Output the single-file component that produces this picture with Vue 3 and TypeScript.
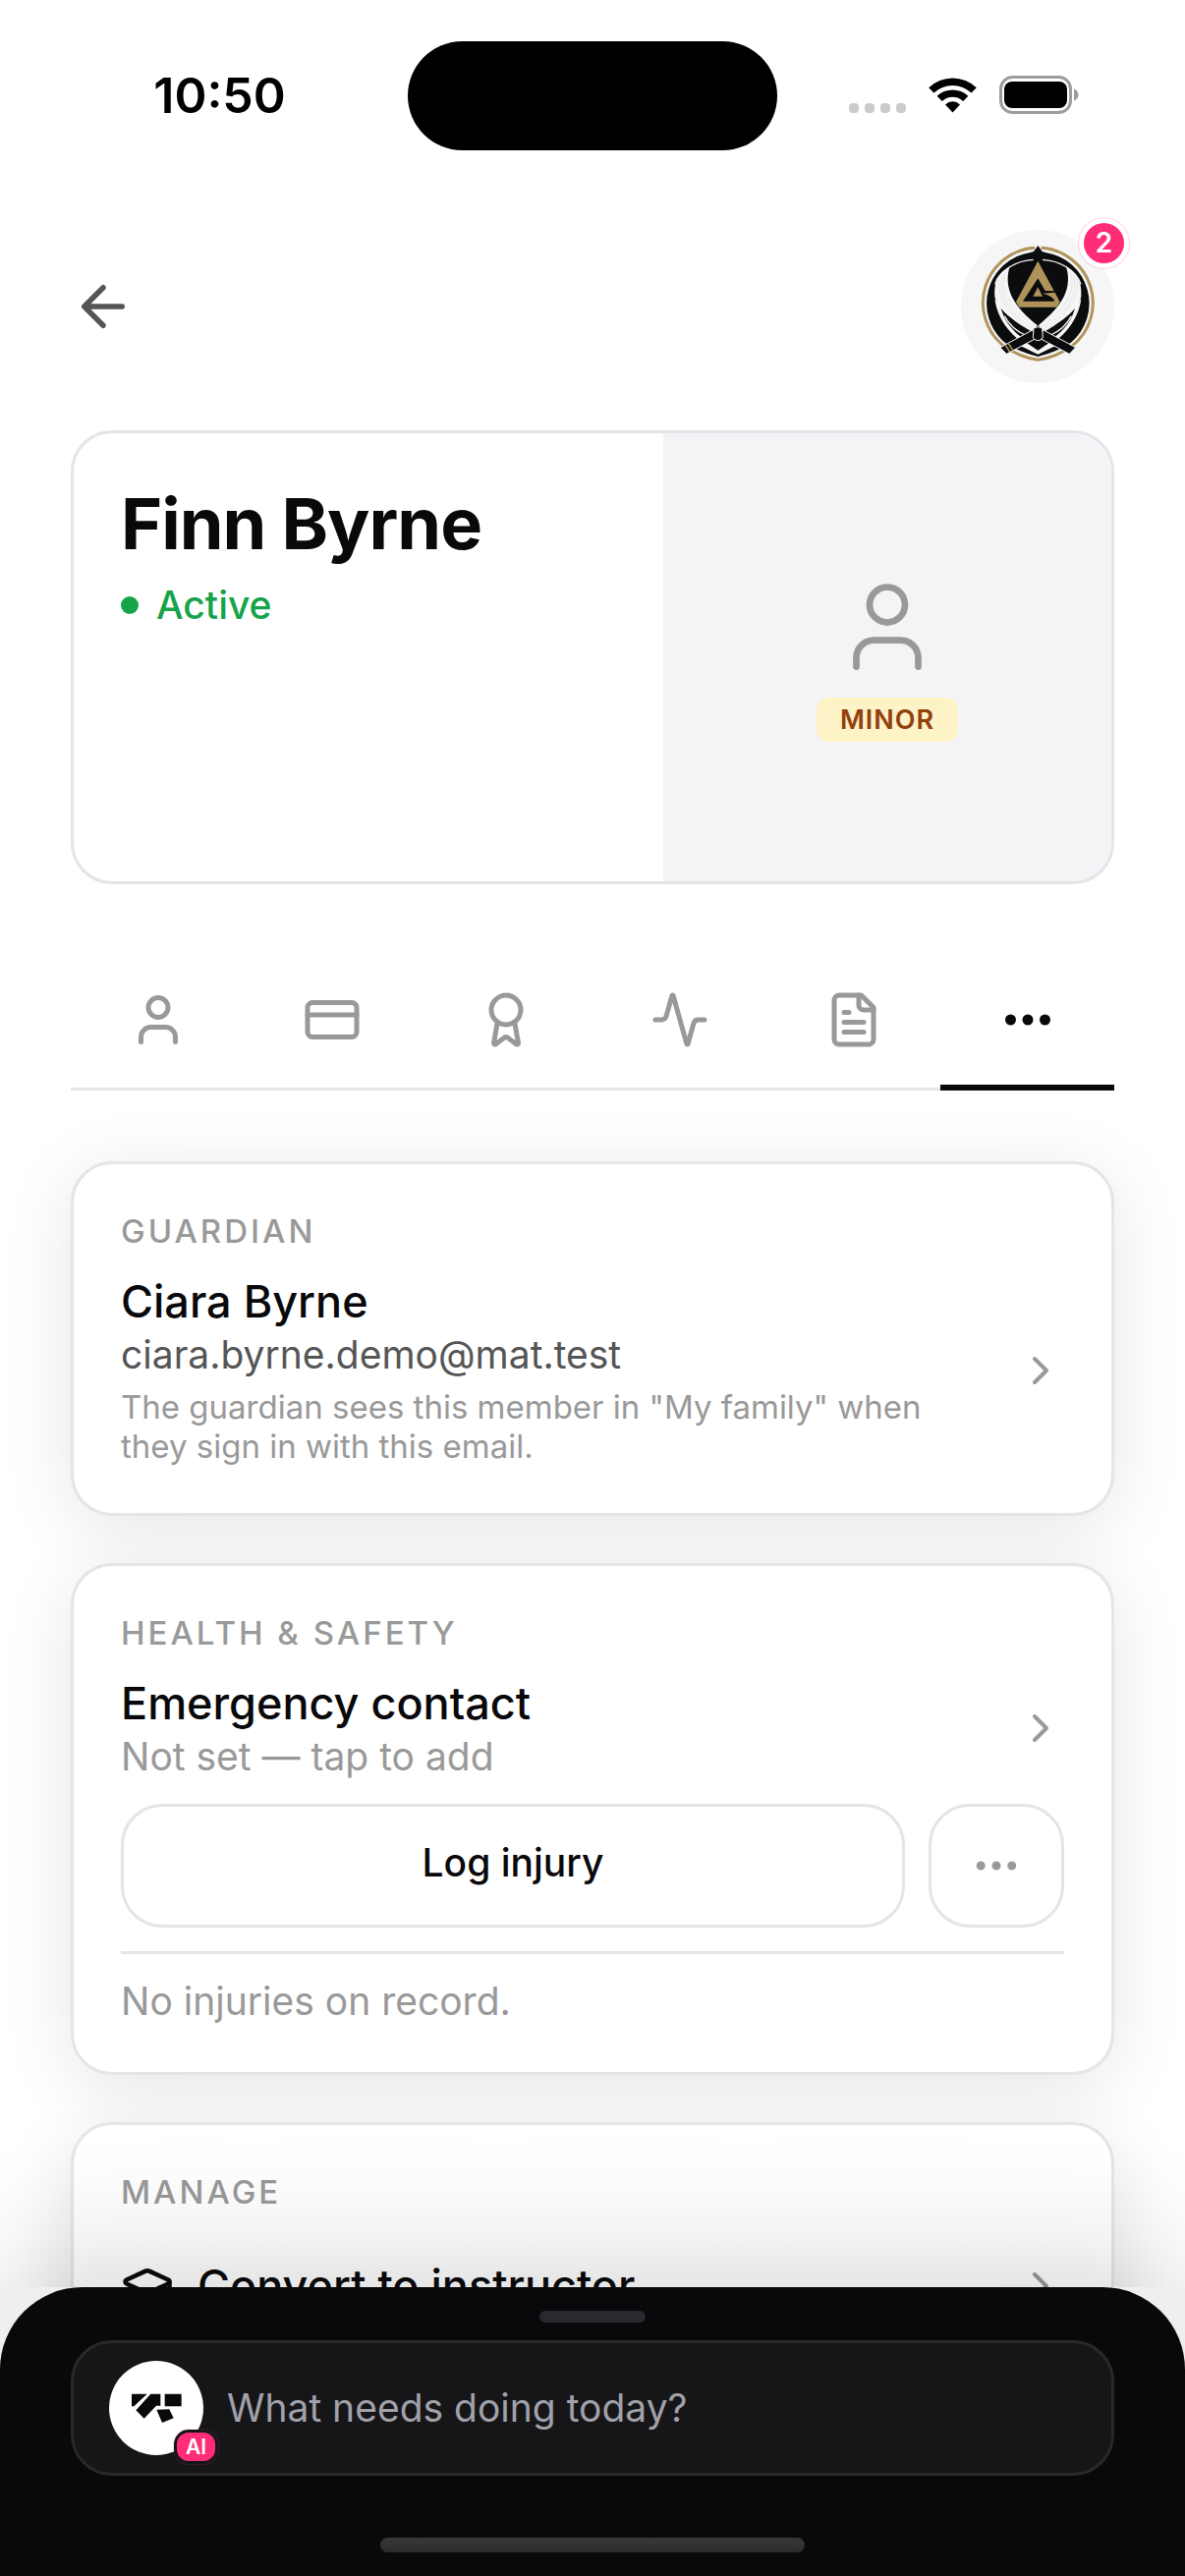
<script setup lang="ts">
import { ref } from 'vue'

interface Tab {
  id: string
  label: string
  paths: string[]
}

const tabs: Tab[] = [
  {
    id: 'profile',
    label: 'Profile',
    paths: ['M19 21v-2a4 4 0 0 0-4-4H9a4 4 0 0 0-4 4v2', 'M8 7a4 4 0 1 0 8 0a4 4 0 1 0-8 0'],
  },
  {
    id: 'billing',
    label: 'Billing',
    paths: ['M4 5h16a2 2 0 0 1 2 2v10a2 2 0 0 1-2 2H4a2 2 0 0 1-2-2V7a2 2 0 0 1 2-2z', 'M2 10h20'],
  },
  {
    id: 'grading',
    label: 'Grading',
    paths: [
      'm15.477 12.89 1.515 8.526a.5.5 0 0 1-.81.47l-3.58-2.687a1 1 0 0 0-1.197 0l-3.586 2.686a.5.5 0 0 1-.81-.469l1.514-8.526',
      'M6 8a6 6 0 1 0 12 0a6 6 0 1 0-12 0',
    ],
  },
  {
    id: 'activity',
    label: 'Activity',
    paths: [
      'M22 12h-2.48a2 2 0 0 0-1.93 1.46l-2.35 8.36a.25.25 0 0 1-.48 0L9.24 2.18a.25.25 0 0 0-.48 0l-2.35 8.36A2 2 0 0 1 4.49 12H2',
    ],
  },
  {
    id: 'documents',
    label: 'Documents',
    paths: [
      'M15 2H6a2 2 0 0 0-2 2v16a2 2 0 0 0 2 2h12a2 2 0 0 0 2-2V7z',
      'M14 2v4a2 2 0 0 0 2 2h4',
      'M10 9H8',
      'M16 13H8',
      'M16 17H8',
    ],
  },
  {
    id: 'more',
    label: 'More',
    paths: [
      'M11 12a1 1 0 1 0 2 0a1 1 0 1 0-2 0',
      'M18 12a1 1 0 1 0 2 0a1 1 0 1 0-2 0',
      'M4 12a1 1 0 1 0 2 0a1 1 0 1 0-2 0',
    ],
  },
]

const activeTab = ref('more')
const prompt = ref('')
</script>

<template>
  <div class="app">
    <div class="status">
      <span class="time">10:50</span>
      <span class="island"></span>
      <span class="signals">
        <svg width="58" height="40" viewBox="0 0 58 40" fill="#cbcbcb" aria-hidden="true">
          <rect x="0" y="28" width="10" height="10" rx="4" />
          <rect x="16" y="28" width="10" height="10" rx="4" />
          <rect x="32" y="28" width="10" height="10" rx="4" />
          <rect x="48" y="28" width="10" height="10" rx="4" />
        </svg>
        <svg width="51" height="40" viewBox="0 0 51 40" aria-hidden="true">
          <path d="M1.2 12.2A35 35 0 0 1 49.8 12.2L44.6 17.6A27.5 27.5 0 0 0 6.4 17.6Z" />
          <path d="M9.6 20.8A23 23 0 0 1 41.4 20.8L36.2 26.1A15.4 15.4 0 0 0 14.8 26.1Z" />
          <path d="M18 29.4A10.8 10.8 0 0 1 33 29.4L25.5 37.4Z" />
        </svg>
        <svg width="81" height="40" viewBox="0 0 81 40" aria-hidden="true">
          <rect x="1.5" y="1.5" width="71" height="36" rx="12" fill="none" stroke="#9c9c9c" stroke-width="3" />
          <rect x="5" y="6" width="64" height="27" rx="8" />
          <path d="M76 13.5c6 2 6 10 0 12z" fill="#9c9c9c" />
        </svg>
      </span>
    </div>

    <main class="content">
      <header class="topbar">
        <button class="back" type="button" aria-label="Back">
          <svg class="icon" width="66" height="66" viewBox="0 0 24 24"><path d="m12 19-7-7 7-7M19 12H5" /></svg>
        </button>
        <button class="club" type="button" aria-label="Club, 2 notifications">
          <svg width="156" height="156" viewBox="54 72 468 468" aria-hidden="true">
            <path
              d="M279 127A168 168 0 0 0 183 425Q232 460 289 469Q346 460 395 425A168 168 0 0 0 299 127"
              fill="none" stroke="#b0935a" stroke-width="9"
            />
            <path
              d="M289 120L302 138L312 141A157 157 0 0 1 389 417Q344 446 289 459Q234 446 189 417A157 157 0 0 1 266 141L276 138Z"
              fill="#0a0c0e"
            />
            <path d="M275 163C225 165 170 195 158 238M303 163C353 165 408 195 420 238" fill="none" stroke="#f6f6f6" stroke-width="4" />
            <path d="M203 184C172 204 154 225 157 275C168 318 215 350 268 382L288 364C235 320 178 265 203 184Z" fill="#f6f6f6" />
            <path d="M375 184C406 204 424 225 421 275C410 318 363 350 310 382L290 364C343 320 400 265 375 184Z" fill="#f6f6f6" />
            <path
              d="M180 210C163 285 220 335 273 375M190 200C167 275 225 325 280 370M170 222C160 285 212 338 266 378M398 210C415 285 358 335 305 375M388 200C411 275 353 325 298 370M408 222C418 285 366 338 312 378"
              fill="none" stroke="#dedede" stroke-width="2"
            />
            <path d="M157 282C163 335 198 385 234 409L242 401C210 380 183 345 175 305ZM421 282C415 335 380 385 344 409L336 401C368 380 395 345 403 305Z" fill="#f6f6f6" />
            <path d="M187 335C200 360 220 380 250 393M391 335C378 360 358 380 328 393" fill="none" stroke="#f6f6f6" stroke-width="4" />
            <path d="M228 422L247 412L289 440L331 412L350 422L289 452Z" fill="#f6f6f6" />
            <path d="M262 402L289 428L316 402Z" fill="#0a0c0e" />
            <g fill="#0a0c0e" stroke="#f6f6f6" stroke-width="3">
              <path d="M274 377L174 431L193 451L280 405Z" />
              <path d="M304 377L404 431L385 451L298 405Z" />
              <path d="M276 372Q289 364 302 372L304 402Q289 418 274 402Z" />
            </g>
            <path d="M190 424L203 444M199 419L212 439" stroke="#b0935a" stroke-width="5" />
            <path d="M289 167L356 292L346 308H232L222 292Z" fill="#b0935a" />
            <path d="M289 220L311 258L342 259L341 263L302 266Q328 270 341 288L334 290H243Z" fill="#0a0c0e" />
            <path d="M289 247L303 275H274Z" fill="#b0935a" />
          </svg>
          <span class="count">2</span>
        </button>
      </header>

      <section class="member">
        <div class="identity">
          <h1>Finn Byrne</h1>
          <p class="state"><span class="dot"></span>Active</p>
        </div>
        <div class="photo">
          <svg class="icon thin" width="108" height="108" viewBox="0 0 24 24" aria-hidden="true">
            <path d="M19 21v-2a4 4 0 0 0-4-4H9a4 4 0 0 0-4 4v2" />
            <circle cx="12" cy="7" r="4" />
          </svg>
          <span class="minor">MINOR</span>
        </div>
      </section>

      <nav class="tabs" aria-label="Member sections">
        <button
          v-for="tab in tabs"
          :key="tab.id"
          type="button"
          class="tab"
          :class="{ active: tab.id === activeTab }"
          :aria-label="tab.label"
          @click="activeTab = tab.id"
        >
          <svg class="icon" width="60" height="60" viewBox="0 0 24 24">
            <path v-for="d in tab.paths" :key="d" :d="d" />
          </svg>
        </button>
      </nav>

      <div class="cards">
        <section class="card">
          <h2>GUARDIAN</h2>
          <button class="row" type="button">
            <span class="lines">
              <span class="title">Ciara Byrne</span>
              <span class="sub dark">ciara.byrne.demo@mat.test</span>
              <span class="note">The guardian sees this member in "My family" when they sign in with this email.</span>
            </span>
            <svg class="icon" width="48" height="48" viewBox="0 0 24 24"><path d="m9 18 6-6-6-6" /></svg>
          </button>
        </section>

        <section class="card">
          <h2>HEALTH &amp; SAFETY</h2>
          <button class="row" type="button">
            <span class="lines">
              <span class="title">Emergency contact</span>
              <span class="sub">Not set — tap to add</span>
            </span>
            <svg class="icon" width="48" height="48" viewBox="0 0 24 24"><path d="m9 18 6-6-6-6" /></svg>
          </button>
          <div class="actions">
            <button class="outline log" type="button">Log injury</button>
            <button class="outline menu" type="button" aria-label="More options">
              <svg class="icon" width="54" height="54" viewBox="0 0 24 24">
                <circle cx="12" cy="12" r="1" /><circle cx="19" cy="12" r="1" /><circle cx="5" cy="12" r="1" />
              </svg>
            </button>
          </div>
          <p class="record">No injuries on record.</p>
        </section>

        <section class="card last">
          <h2>MANAGE</h2>
          <button class="row link" type="button">
            <svg class="icon ink" width="54" height="54" viewBox="0 0 24 24">
              <path d="M21.42 10.922a1 1 0 0 0-.019-1.838L12.83 5.18a2 2 0 0 0-1.66 0L2.6 9.08a1 1 0 0 0 0 1.832l8.57 3.908a2 2 0 0 0 1.66 0z" />
              <path d="M22 10v6" />
              <path d="M6 12.5V16a6 3 0 0 0 12 0v-3.5" />
            </svg>
            <span class="lines title">Convert to instructor</span>
            <svg class="icon" width="48" height="48" viewBox="0 0 24 24"><path d="m9 18 6-6-6-6" /></svg>
          </button>
        </section>
      </div>
    </main>

    <footer class="dock">
      <div class="sheet">
        <span class="grip"></span>
        <label class="ask">
          <span class="bot">
            <svg width="96" height="96" viewBox="0 0 288 288" aria-hidden="true">
              <path d="M69 101H116L76 139H69ZM127 101H157V137H144L107 176L82 151ZM170 101H221V139H170ZM145 149L184 148L197 175L162 189Z" fill="#09090b" />
            </svg>
            <span class="ai">AI</span>
          </span>
          <input v-model="prompt" type="text" placeholder="What needs doing today?" aria-label="Ask the assistant" />
        </label>
        <span class="home"></span>
      </div>
    </footer>
  </div>
</template>

<style>
body {
  margin: 0;
  background: #fff;
}
</style>

<style scoped>
* {
  box-sizing: border-box;
}

.app {
  display: flex;
  flex-direction: column;
  height: 100vh;
  overflow: hidden;
  background: #fff;
  color: #09090b;
  font-family: Inter, 'Liberation Sans', sans-serif;
}

h1,
h2,
p {
  margin: 0;
}

button {
  margin: 0;
  padding: 0;
  border: 0;
  background: none;
  color: inherit;
  font: inherit;
  text-align: left;
}

svg {
  display: block;
  flex: none;
}

.icon {
  fill: none;
  stroke: #999;
  stroke-width: 2;
  stroke-linecap: round;
  stroke-linejoin: round;
}

.icon.thin {
  stroke-width: 1.5;
}

.icon.ink {
  stroke: #09090b;
}

.status {
  display: grid;
  flex: none;
  grid-template-columns: 1fr 376px 1fr;
  align-items: center;
  height: 186px;
  padding-top: 8px;
}

.time {
  padding-left: 32px;
  color: #000;
  font-size: 50px;
  font-weight: 600;
  line-height: 60px;
  text-align: center;
}

.island {
  height: 111px;
  border-radius: 56px;
  background: #000;
}

.signals {
  display: flex;
  justify-content: center;
  gap: 22px;
  padding-right: 36px;
}

.content {
  flex: 1;
  min-height: 0;
  padding: 48px 72px 0;
  overflow: hidden;
}

.topbar {
  display: flex;
  align-items: center;
  justify-content: space-between;
}

.back .icon {
  stroke: #555;
}

.club {
  position: relative;
  border-radius: 50%;
  background: #f6f6f6;
}

.count {
  position: absolute;
  top: -12px;
  right: -15px;
  min-width: 51px;
  height: 51px;
  border: 5px solid #fff;
  border-radius: 26px;
  background: #ff2d78;
  box-shadow: 0 0 0 1px rgba(255, 45, 120, 0.2);
  color: #fff;
  font-size: 28px;
  font-weight: 600;
  line-height: 41px;
  text-align: center;
}

.member {
  display: flex;
  min-height: 462px;
  margin-top: 48px;
  overflow: hidden;
  border: 3px solid #e4e4e9;
  border-radius: 42px;
}

.identity {
  flex: 1;
  padding: 48px;
}

h1 {
  font-size: 72px;
  font-weight: 700;
  letter-spacing: -1px;
  line-height: 88px;
}

.state {
  display: flex;
  align-items: center;
  gap: 18px;
  margin-top: 15px;
  color: #16a34a;
  font-size: 39px;
  font-weight: 500;
  line-height: 48px;
}

.dot {
  width: 18px;
  height: 18px;
  border-radius: 50%;
  background: currentColor;
}

.photo {
  display: flex;
  flex-direction: column;
  align-items: center;
  justify-content: center;
  gap: 18px;
  width: 456px;
  background: #f4f4f7;
}

.minor {
  padding: 6px 24px;
  border-radius: 12px;
  background: #fef3c7;
  color: #92400e;
  font-size: 27px;
  font-weight: 600;
  letter-spacing: 1px;
  line-height: 33px;
}

.tabs {
  display: flex;
  margin-top: 72px;
  box-shadow: inset 0 -3px #e4e4e9;
}

.tab {
  display: flex;
  flex: 1;
  justify-content: center;
  padding: 36px 0 42px;
}

.tab.active {
  box-shadow: inset 0 -6px #09090b;
}

.tab.active .icon {
  stroke: #09090b;
  stroke-width: 2.4;
}

.cards {
  display: flex;
  flex-direction: column;
  gap: 48px;
  margin-top: 72px;
}

.card {
  padding: 48px;
  border: 3px solid #e4e4e9;
  border-radius: 42px;
  background: #fff;
  box-shadow: 0 12px 72px rgba(9, 9, 11, 0.1);
}

.card.last {
  min-height: 480px;
}

h2 {
  color: #999;
  font-size: 33px;
  font-weight: 500;
  letter-spacing: 3px;
  line-height: 40px;
}

.row {
  display: flex;
  align-items: center;
  gap: 24px;
  width: 100%;
  margin-top: 24px;
}

.row.link {
  padding: 24px 0;
}

.lines {
  flex: 1;
}

.title {
  display: block;
  font-size: 45px;
  font-weight: 500;
  line-height: 55px;
}

.sub {
  display: block;
  margin-top: 3px;
  color: #999;
  font-size: 39px;
  line-height: 48px;
}

.sub.dark {
  color: #555;
}

.note {
  display: block;
  margin-top: 9px;
  color: #999;
  font-size: 33px;
  line-height: 40px;
}

.actions {
  display: flex;
  gap: 24px;
  margin-top: 24px;
}

.outline {
  display: flex;
  align-items: center;
  justify-content: center;
  height: 126px;
  border: 3px solid #e4e4e9;
  border-radius: 42px;
}

.log {
  flex: 1;
  padding-bottom: 6px;
  font-size: 39px;
  font-weight: 500;
  line-height: 48px;
}

.menu {
  width: 138px;
}

.record {
  margin-top: 24px;
  padding-top: 24px;
  border-top: 3px solid #e4e4e9;
  color: #999;
  font-size: 39px;
  line-height: 48px;
}

.dock {
  position: relative;
  flex: none;
  background: #efeff0;
  box-shadow: 0 -12px 144px rgba(9, 9, 20, 0.19);
}

.sheet {
  display: flex;
  flex-direction: column;
  align-items: center;
  padding: 24px 72px;
  border-radius: 84px 84px 0 0;
  background: #09090b;
}

.grip {
  width: 108px;
  height: 12px;
  border-radius: 6px;
  background: #29292e;
}

.ask {
  display: flex;
  align-items: center;
  gap: 24px;
  width: 100%;
  height: 138px;
  margin-top: 18px;
  padding: 0 36px;
  border: 3px solid #29292b;
  border-radius: 42px;
  background: #161618;
}

.bot {
  position: relative;
  border-radius: 50%;
  background: #fff;
}

.ai {
  position: absolute;
  right: -15px;
  bottom: -9px;
  padding: 0 9px;
  border: 3px solid #161618;
  border-radius: 15px;
  background: #ff2d78;
  box-shadow: 0 0 0 1px rgba(255, 45, 120, 0.15);
  color: #fff;
  font-size: 21px;
  font-weight: 600;
  line-height: 29px;
}

input {
  flex: 1;
  min-width: 0;
  padding: 0;
  border: 0;
  outline: 0;
  background: none;
  color: #fff;
  font: inherit;
  font-size: 39px;
  line-height: 48px;
}

input::placeholder {
  color: #a1a1aa;
  opacity: 1;
}

.home {
  width: 432px;
  height: 15px;
  margin-top: 63px;
  border-radius: 8px;
  background: linear-gradient(#383838, #2c2c2c);
}
</style>
